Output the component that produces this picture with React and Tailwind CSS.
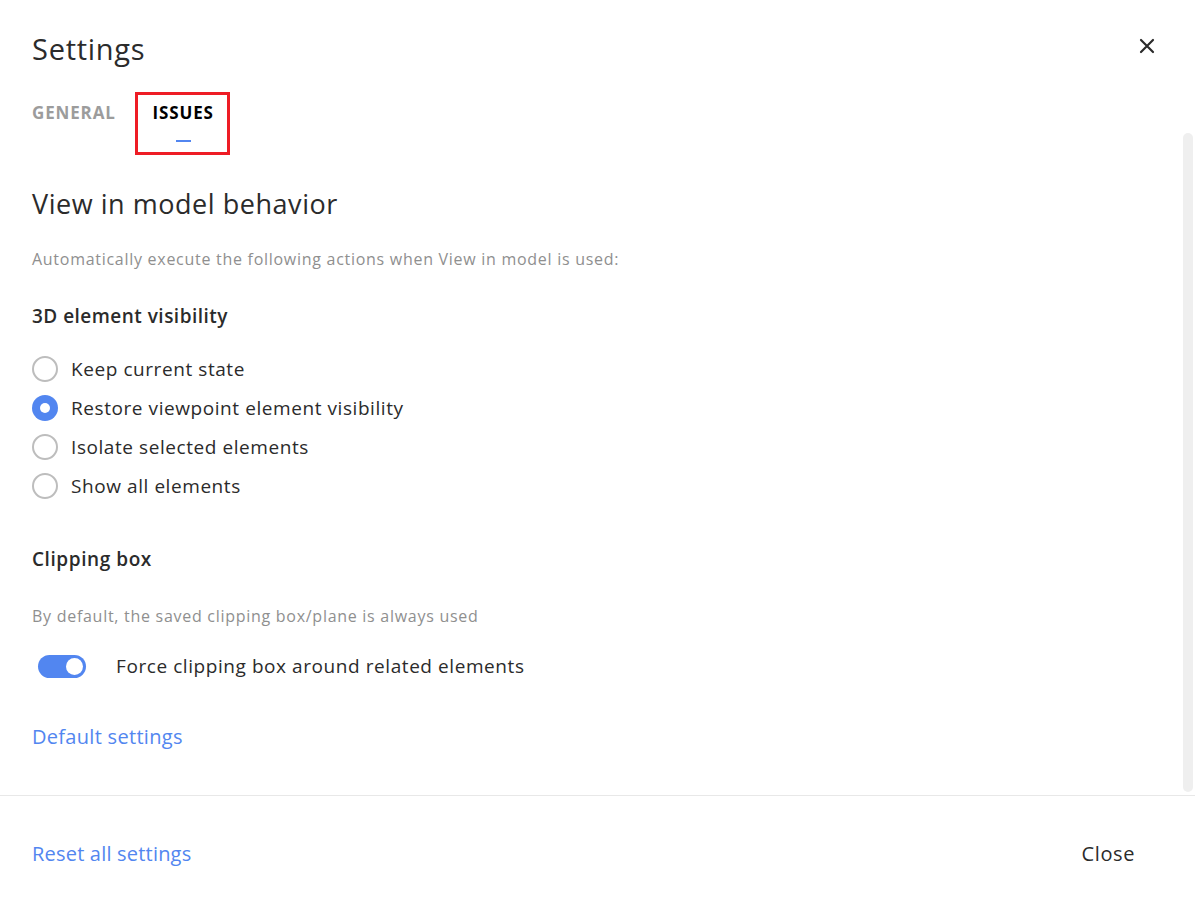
import React from "react";

const font = { fontFamily: "'Open Sans', Lato, sans-serif" };

function Radio({ checked, label }) {
  return (
    <div className="flex items-center h-[39px]">
      {checked ? (
        <span className="w-[26px] h-[26px] rounded-full bg-[#5286f0] flex items-center justify-center">
          <span className="w-[10px] h-[10px] rounded-full bg-white" />
        </span>
      ) : (
        <span className="w-[26px] h-[26px] rounded-full border-[2.5px] border-[#bdbdbd] bg-white" />
      )}
      <span className="ml-[13px] text-[19px] leading-[24px] tracking-[0.03em] text-[#2b2b2b]">{label}</span>
    </div>
  );
}

export default function App() {
  return (
    <div className="w-[1195px] h-[910px] bg-white flex flex-col overflow-hidden" style={font}>
      <div className="flex items-start justify-between pl-[32px] pr-[38px] pt-[29px] h-[92px]">
        <h1 className="text-[29px] leading-[40px] tracking-[0.025em] text-[#2b2b2b] font-medium">Settings</h1>
        <button className="mt-[7px] text-[#2b2b2b]">
          <svg width="20" height="20" viewBox="0 0 20 20" fill="none" stroke="#2b2b2b" strokeWidth="2.2" strokeLinecap="round">
            <path d="M4 4L16 16M16 4L4 16" />
          </svg>
        </button>
      </div>
      <div className="flex-1 flex">
        <div className="flex-1 pl-[32px]">
          <div className="flex items-start h-[63px]">
            <div className="pt-[11px] text-[17px] font-bold tracking-[0.05em] text-[#9c9c9c] leading-[20px]">GENERAL</div>
            <div className="ml-[19px] w-[95px] h-[63px] border-[3px] border-[#ee1c25] flex flex-col items-center pt-[8px]">
              <div className="text-[17px] font-bold tracking-[0.05em] text-black leading-[20px] pl-[2px]">ISSUES</div>
              <div className="mt-[17px] ml-[2px] w-[15px] h-[2px] bg-[#5286f0]" />
            </div>
          </div>
          <h2 className="mt-[32px] text-[27px] leading-[34px] tracking-[0.02em] text-[#2b2b2b] font-medium">View in model behavior</h2>
          <p className="mt-[28px] text-[16px] leading-[21px] tracking-[0.045em] text-[#8f8f8f]">Automatically execute the following actions when View in model is used:</p>
          <h3 className="mt-[35px] text-[19px] leading-[22px] tracking-[0.025em] text-[#2b2b2b] font-semibold">3D element visibility</h3>
          <div className="mt-[22px] flex flex-col">
            <Radio label="Keep current state" />
            <Radio checked label="Restore viewpoint element visibility" />
            <Radio label="Isolate selected elements" />
            <Radio label="Show all elements" />
          </div>
          <h3 className="mt-[43px] text-[19px] leading-[22px] tracking-[0.03em] text-[#2b2b2b] font-semibold">Clipping box</h3>
          <p className="mt-[36px] text-[16px] leading-[21px] tracking-[0.045em] text-[#8f8f8f]">By default, the saved clipping box/plane is always used</p>
          <div className="mt-[27px] flex items-center h-[24px]">
            <div className="ml-[6px] w-[48px] h-[23px] rounded-full bg-[#5286f0] flex items-center justify-end pr-[3px]">
              <span className="w-[17px] h-[17px] rounded-full bg-white" />
            </div>
            <span className="ml-[30px] text-[19px] leading-[24px] tracking-[0.03em] text-[#2b2b2b]">Force clipping box around related elements</span>
          </div>
          <div className="mt-[47px] text-[20px] leading-[24px] tracking-[0.015em] text-[#5286f0]">Default settings</div>
        </div>
        <div className="w-[10px] mr-[2px] mt-[41px] mb-[3px] rounded-full bg-[#efefef]" />
      </div>
      <div className="h-[115px] border-t border-[#e8e8e8] flex items-center justify-between pl-[32px] pr-[60px] pt-[2px]">
        <span className="text-[20px] tracking-[0.01em] text-[#5286f0]">Reset all settings</span>
        <span className="text-[20px] tracking-[0.03em] text-[#2b2b2b]">Close</span>
      </div>
    </div>
  );
}
